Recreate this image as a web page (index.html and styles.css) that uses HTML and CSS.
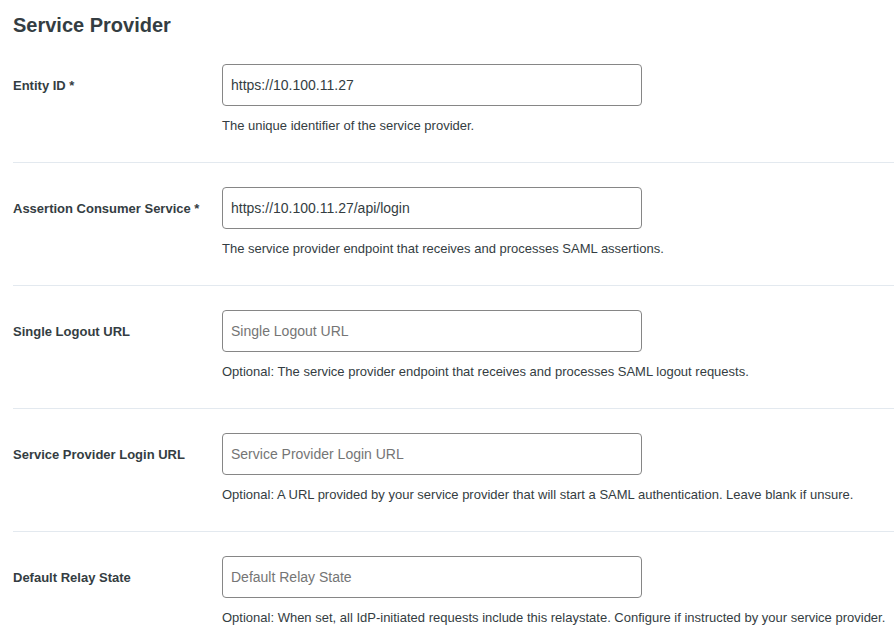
FILE: index.html
```html
<!DOCTYPE html>
<html lang="en">
<head>
<meta charset="utf-8">
<title>Service Provider</title>
<link rel="stylesheet" href="styles.css">
</head>
<body>
<main class="settings">
  <h1 class="title">Service Provider</h1>
  <form class="form">
    <div class="field">
      <label class="label" for="entity">Entity ID *</label>
      <div class="control">
        <input class="input" id="entity" type="text" value="https://10.100.11.27" aria-describedby="entity-help">
        <p class="help" id="entity-help">The unique identifier of the service provider.</p>
      </div>
    </div>
    <div class="field">
      <label class="label" for="acs">Assertion Consumer Service *</label>
      <div class="control">
        <input class="input" id="acs" type="text" value="https://10.100.11.27/api/login" aria-describedby="acs-help">
        <p class="help" id="acs-help">The service provider endpoint that receives and processes SAML assertions.</p>
      </div>
    </div>
    <div class="field">
      <label class="label" for="logout">Single Logout URL</label>
      <div class="control">
        <input class="input" id="logout" type="text" placeholder="Single Logout URL" aria-describedby="logout-help">
        <p class="help" id="logout-help">Optional: The service provider endpoint that receives and processes SAML logout requests.</p>
      </div>
    </div>
    <div class="field">
      <label class="label" for="login">Service Provider Login URL</label>
      <div class="control">
        <input class="input" id="login" type="text" placeholder="Service Provider Login URL" aria-describedby="login-help">
        <p class="help" id="login-help">Optional: A URL provided by your service provider that will start a SAML authentication. Leave blank if unsure.</p>
      </div>
    </div>
    <div class="field">
      <label class="label" for="relay">Default Relay State</label>
      <div class="control">
        <input class="input" id="relay" type="text" placeholder="Default Relay State" aria-describedby="relay-help">
        <p class="help" id="relay-help">Optional: When set, all IdP-initiated requests include this relaystate. Configure if instructed by your service provider.</p>
      </div>
    </div>
  </form>
</main>
</body>
</html>
```
FILE: styles.css
```css
* {
  box-sizing: border-box;
}

body {
  margin: 0;
  background: #fff;
  color: #343d42;
  font-family: "Liberation Sans", Arial, sans-serif;
}

.settings {
  padding: 12px 0 0 13px;
}

.title {
  margin: 0 0 2px;
  font-size: 20px;
  line-height: 26px;
  font-weight: 700;
}

.field {
  display: flex;
  align-items: flex-start;
  padding: 24px 0 27px;
  border-bottom: 1px solid #e3e9ef;
}

.field:last-child {
  padding-bottom: 12px;
  border-bottom: 0;
}

.label {
  flex: 0 0 209px;
  font-size: 13px;
  line-height: 44px;
  font-weight: 700;
}

.control {
  flex: 1;
  min-width: 0;
}

.input {
  display: block;
  width: 100%;
  max-width: 420px;
  height: 42px;
  padding: 0 8px;
  border: 1px solid #868686;
  border-radius: 4px;
  background: #fff;
  color: #343d42;
  font-family: inherit;
  font-size: 14px;
}

.input::placeholder {
  color: #757575;
  opacity: 1;
}

.help {
  margin: 11px 0 0;
  font-size: 13px;
  line-height: 18px;
}
```
